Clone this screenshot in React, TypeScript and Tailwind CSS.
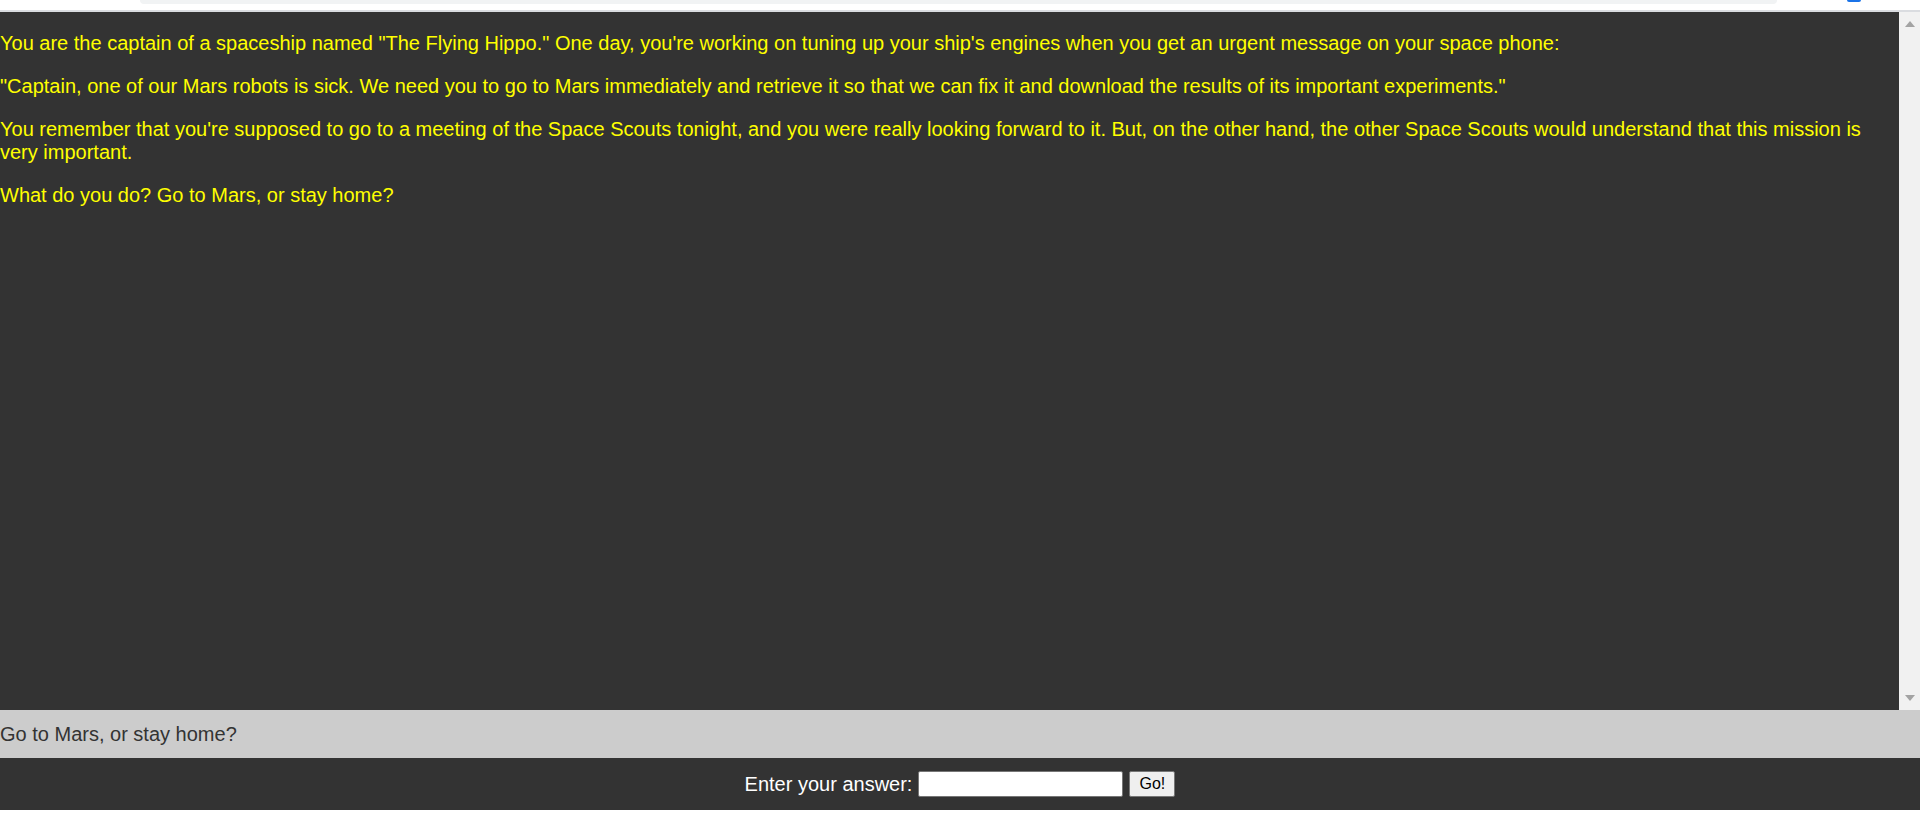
const paragraphs = [
  'You are the captain of a spaceship named "The Flying Hippo." One day, you\'re working on tuning up your ship\'s engines when you get an urgent message on your space phone:',
  '"Captain, one of our Mars robots is sick. We need you to go to Mars immediately and retrieve it so that we can fix it and download the results of its important experiments."',
  "You remember that you're supposed to go to a meeting of the Space Scouts tonight, and you were really looking forward to it. But, on the other hand, the other Space Scouts would understand that this mission is very important.",
  'What do you do? Go to Mars, or stay home?',
];

const App = () => {
  return (
    <div className="flex h-[816px] w-full flex-col overflow-hidden bg-white font-['Liberation_Sans',Arial,sans-serif]">
      {/* browser chrome leftovers */}
      <div className="flex h-[10px] items-start bg-white">
        <div className="ml-[140px] h-[4px] w-[1637px] rounded-b-[6px] bg-[#f1f3f4]"></div>
        <div className="ml-[70px] h-[2px] w-[14px] rounded-b-full bg-[#1a73e8]"></div>
      </div>
      <div className="h-[2px] bg-[#dadce0]"></div>

      {/* story */}
      <div className="flex h-[698px]">
        <div className="flex-1 bg-[#333333] text-[20px] leading-[23px] text-[#ffff00]">
          {paragraphs.map((p, i) => (
            <p key={i} className="my-[20px]">{p}</p>
          ))}
        </div>
        <div className="flex w-[21px] flex-col items-center justify-between bg-[#f1f1f1] py-[9px]">
          <svg width="10" height="6" viewBox="0 0 10 6">
            <path d="M5 0 L10 6 L0 6 Z" fill="#a3a3a3" />
          </svg>
          <svg width="10" height="6" viewBox="0 0 10 6">
            <path d="M0 0 L10 0 L5 6 Z" fill="#a3a3a3" />
          </svg>
        </div>
      </div>

      {/* question */}
      <div className="flex h-[48px] items-center bg-[#cccccc] text-[20px] text-[#333333]">
        Go to Mars, or stay home?
      </div>

      {/* answer bar */}
      <div className="flex h-[52px] items-center justify-center gap-[6px] bg-[#333333]">
        <label className="text-[20px] text-white">Enter your answer:</label>
        <input
          type="text"
          className="h-[26px] w-[205px] rounded-[2px] border border-[#767676] bg-white px-1 text-[16px] text-black"
        />
        <button className="h-[26px] w-[46px] rounded-[2px] border border-[#767676] bg-[#efefef] text-[16px] text-black">
          Go!
        </button>
      </div>
      <div className="flex-1 bg-white"></div>
    </div>
  );
};

export default App;
